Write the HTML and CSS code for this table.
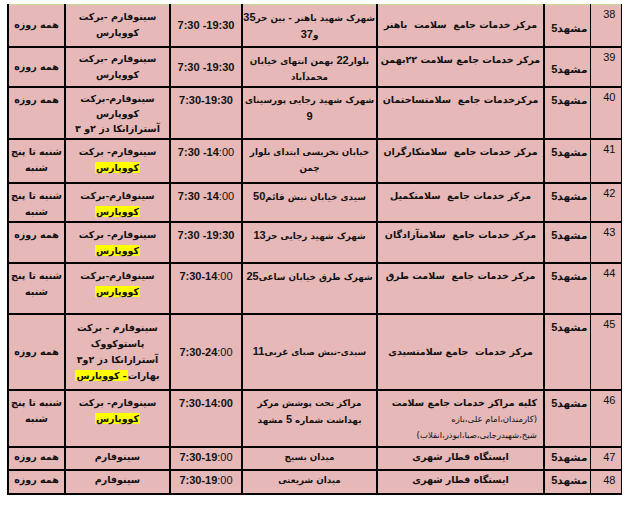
FILE: index.html
```html
<!DOCTYPE html>
<html lang="fa">
<head>
<meta charset="utf-8">
<title>مراکز واکسیناسیون</title>
<link rel="stylesheet" href="styles.css">
</head>
<body>
<table class="grid" dir="rtl">
  <colgroup>
    <col class="c-num"><col class="c-city"><col class="c-center"><col class="c-addr"><col class="c-time"><col class="c-vac"><col class="c-days">
  </colgroup>
  <tbody>
    <tr class="r38">
      <td class="num">38</td>
      <td class="city m low">مشهد<b class="n">5</b></td>
      <td class="center m">مرکز خدمات جامع&nbsp; سلامت&nbsp; باهنر</td>
      <td class="addr t">شهرک شهید باهنر - بین حر<b class="n">35</b><br>و<b class="n">37</b></td>
      <td class="time m"><span dir="ltr">7:30 -19:30</span></td>
      <td class="vac m">سینوفارم -برکت<br>کووپارس</td>
      <td class="days m">همه روزه</td>
    </tr>
    <tr class="r39">
      <td class="num">39</td>
      <td class="city m low">مشهد<b class="n">5</b></td>
      <td class="center t">مرکز خدمات جامع سلامت ۲۲بهمن</td>
      <td class="addr t">بلوار<b class="n">22</b> بهمن انتهای خیابان<br>محمدآباد</td>
      <td class="time m"><span dir="ltr">7:30 -19:30</span></td>
      <td class="vac m">سینوفارم -برکت<br>کووپارس</td>
      <td class="days m">همه روزه</td>
    </tr>
    <tr class="r40">
      <td class="num">40</td>
      <td class="city t">مشهد<b class="n">5</b></td>
      <td class="center t">مرکزخدمات جامع&nbsp; سلامتساختمان</td>
      <td class="addr t">شهرک شهید رجایی پورسینای<br><b class="n">9</b></td>
      <td class="time t"><span dir="ltr">7:30-19:30</span></td>
      <td class="vac t tight">سینوفارم-برکت<br>کووپارس<br>آسترازانکا دز ۲و ۳</td>
      <td class="days t">همه روزه</td>
    </tr>
    <tr class="r41">
      <td class="num">41</td>
      <td class="city t">مشهد<b class="n">5</b></td>
      <td class="center t">مرکز خدمات جامع&nbsp; سلامتکارگران</td>
      <td class="addr t">خیابان تخریسی ابتدای بلوار<br>چمن</td>
      <td class="time t"><span dir="ltr">7:30 -14<span class="lt">:00</span></span></td>
      <td class="vac t">سینوفارم- برکت<br><span class="hl">کووپارس</span></td>
      <td class="days t">شنبه تا پنج<br>شنبه</td>
    </tr>
    <tr class="r42">
      <td class="num">42</td>
      <td class="city t">مشهد<b class="n">5</b></td>
      <td class="center t">مرکز خدمات جامع&nbsp; سلامتکمیل</td>
      <td class="addr t">سیدی خیابان نبش قائم<b class="n">50</b></td>
      <td class="time t"><span dir="ltr">7:30 -14<span class="lt">:00</span></span></td>
      <td class="vac t">سینوفارم-برکت<br><span class="hl">کووپارس</span></td>
      <td class="days t">شنبه تا پنج<br>شنبه</td>
    </tr>
    <tr class="r43">
      <td class="num">43</td>
      <td class="city t">مشهد<b class="n">5</b></td>
      <td class="center t">مرکز خدمات جامع&nbsp; سلامتآزادگان</td>
      <td class="addr t">شهرک شهید رجایی حر<b class="n">13</b></td>
      <td class="time t"><span dir="ltr">7:30 -19:30</span></td>
      <td class="vac t">سینوفارم- برکت<br><span class="hl">کووپارس</span></td>
      <td class="days t">همه روزه</td>
    </tr>
    <tr class="r44">
      <td class="num">44</td>
      <td class="city t">مشهد<b class="n">5</b></td>
      <td class="center t">مرکز خدمات جامع&nbsp; سلامت طرق</td>
      <td class="addr t">شهرک طرق خیابان ساعی<b class="n">25</b></td>
      <td class="time t"><span dir="ltr">7:30-14<span class="lt">:00</span></span></td>
      <td class="vac t">سینوفارم-برکت<br><span class="hl">کووپارس</span></td>
      <td class="days t">شنبه تا پنج<br>شنبه</td>
    </tr>
    <tr class="r45">
      <td class="num">45</td>
      <td class="city t">مشهد<b class="n">5</b></td>
      <td class="center m">مرکز خدمات&nbsp; جامع سلامتسیدی</td>
      <td class="addr m">سیدی-نبش صبای غربی<b class="n">11</b></td>
      <td class="time m"><span dir="ltr">7:30-24<span class="lt">:00</span></span></td>
      <td class="vac m">سینوفارم - برکت<br>پاستوکووک<br>آسترازانکا دز ۲و۳<br>بهارات<span class="hl">- کووپارس</span></td>
      <td class="days m">همه روزه</td>
    </tr>
    <tr class="r46">
      <td class="num">46</td>
      <td class="city t">مشهد<b class="n">5</b></td>
      <td class="center t list">کلیه مراکز خدمات جامع سلامت<br><span class="sub">(کارمندان،امام علی،بازه<br>شیخ،شهیدرجایی،صبا،ابوذر،انقلاب)</span></td>
      <td class="addr t">مراکز تحت پوشش مرکز<br>بهداشت شماره <b class="n">5</b> مشهد</td>
      <td class="time t"><span dir="ltr">7:30-14:00</span></td>
      <td class="vac t">سینوفارم- برکت<br><span class="hl">کووپارس</span></td>
      <td class="days t">شنبه تا پنج<br>شنبه</td>
    </tr>
    <tr class="r47">
      <td class="num">47</td>
      <td class="city t">مشهد<b class="n">5</b></td>
      <td class="center t">ایستگاه قطار شهری</td>
      <td class="addr t">میدان بسیج</td>
      <td class="time t"><span dir="ltr">7:30-19<span class="lt">:00</span></span></td>
      <td class="vac t">سینوفارم</td>
      <td class="days t">همه روزه</td>
    </tr>
    <tr class="r48">
      <td class="num">48</td>
      <td class="city t">مشهد<b class="n">5</b></td>
      <td class="center t">ایستگاه قطار شهری</td>
      <td class="addr t">میدان شریعتی</td>
      <td class="time t"><span dir="ltr">7:30-19<span class="lt">:00</span></span></td>
      <td class="vac t">سینوفارم</td>
      <td class="days t">همه روزه</td>
    </tr>
  </tbody>
</table>
</body>
</html>
```
FILE: styles.css
```css
html, body {
  margin: 0;
  padding: 0;
  background: #ffffff;
}
body {
  padding: 4px 0 0 7px;
}
.grid {
  border-collapse: collapse;
  table-layout: fixed;
  width: 613px;
  background: #e6b8b7;
  border-top: 1px solid #c4d79b;
  font-family: "DejaVu Sans", sans-serif;
  font-weight: bold;
  font-size: 9.5px;
  color: #111111;
}
.c-num { width: 31px; }
.c-city { width: 46px; }
.c-center { width: 167px; }
.c-addr { width: 135px; }
.c-time { width: 72px; }
.c-vac { width: 105px; }
.c-days { width: 57px; }

.grid td {
  border: 2px solid #000000;
  padding: 1px 2px;
  line-height: 16px;
  text-align: center;
  overflow: hidden;
  white-space: nowrap;
}
.grid tr:first-child td { border-top: none; }
.grid td.t { padding-top: 4px; }
.grid td.num {
  border-right: 1px solid #000;
  border-left-width: 1px;
  vertical-align: top;
  text-align: right;
  font-family: "Liberation Sans", sans-serif;
  font-weight: normal;
  font-size: 11px;
  padding: 1px 5px 0 3px;
}
.grid td.city {
  border-right-width: 1px;
  text-align: right;
  font-size: 10.5px;
  padding-left: 2px;
  padding-right: 2px;
}
.grid td.low { padding-top: 6px; }
.grid td.addr {
  font-size: 8.8px;
  padding-left: 1px;
  padding-right: 1px;
}
.grid td.tight { line-height: 15px; padding-top: 3px; }
.t { vertical-align: top; }
.m { vertical-align: middle; }

.n {
  font-family: "Liberation Sans", sans-serif;
  font-weight: bold;
  font-size: 11px;
}
.time {
  font-family: "Liberation Sans", sans-serif;
  font-size: 11px;
}
.lt { font-weight: normal; }
.hl {
  background: #ffff00;
  padding: 0 1px;
}
.grid td.list { text-align: right; padding-right: 6px; }
.sub {
  font-weight: normal;
  font-size: 8.5px;
  line-height: 15px;
}

.r38 { height: 42px; }
.r39 { height: 37px; }
.r40 { height: 52px; }
.r41 { height: 44px; }
.r42 { height: 39px; }
.r43 { height: 41px; }
.r44 { height: 51px; }
.r45 { height: 76px; }
.r46 { height: 57px; }
.r47 { height: 23px; }
.r48 { height: 24px; }
.grid .r47 td, .grid .r48 td { padding-top: 0; padding-bottom: 0; line-height: 18px; }
```
